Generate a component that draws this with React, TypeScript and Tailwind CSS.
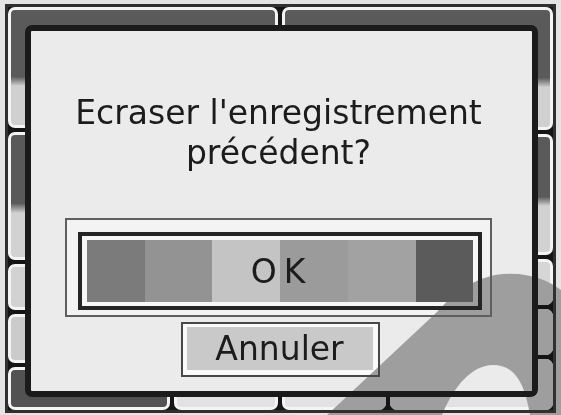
import React from 'react';

const Tile: React.FC<{ className: string }> = ({ className }) => (
  <div className={`rounded-[7px] border-[3px] border-[#f4f4f4] ${className}`} />
);

const blocks = [
  'w-[58px] bg-[#7b7b7b]',
  'w-[67px] bg-[#939393]',
  'w-[68px] bg-[#c4c4c4]',
  'w-[68px] bg-[#9b9b9b]',
  'w-[68px] bg-[#a2a2a2]',
  'w-[57px] bg-[#5b5b5b]',
];

const App: React.FC = () => {
  return (
    <div className="relative w-[561px] h-[415px] overflow-hidden bg-[#e4e4e4] pt-[4px] pl-[5px] pr-[5px] pb-[2px] font-['DejaVu_Sans',sans-serif]">
      {/* background tabs */}
      <div className="h-full flex gap-[4px] border-[3px] border-[#303030] bg-[#151515]">
        <div className="w-[270px] flex flex-col gap-[4px]">
          <Tile className="h-[121px] bg-[linear-gradient(#5a5a5a_58%,#d0d0d0_66%)]" />
          <Tile className="h-[128px] bg-[linear-gradient(#5a5a5a_56%,#d2d2d2_64%)]" />
          <Tile className="h-[46px] bg-[#d2d2d2]" />
          <Tile className="h-[49px] bg-[#cbcbcb]" />
          <div className="flex-1 flex gap-[4px]">
            <Tile className="w-[162px] bg-[#525252]" />
            <Tile className="flex-1 bg-[#e2e2e2]" />
          </div>
        </div>
        <div className="flex-1 flex flex-col gap-[4px]">
          <Tile className="h-[123px] bg-[linear-gradient(#5a5a5a_58%,#d0d0d0_66%)]" />
          <Tile className="h-[121px] bg-[linear-gradient(#5a5a5a_52%,#d2d2d2_60%)]" />
          <Tile className="h-[46px] bg-[#d6d6d6]" />
          <Tile className="h-[46px] bg-[#d0d0d0]" />
          <div className="flex-1 flex gap-[4px]">
            <Tile className="w-[104px] bg-[#e2e2e2]" />
            <Tile className="flex-1 bg-[#e2e2e2]" />
          </div>
        </div>
      </div>

      {/* dialog */}
      <div className="absolute left-[25px] top-[25px] w-[513px] h-[372px] rounded-[7px] border-[6px] border-[#1b1b1b] bg-[#ebebeb] flex flex-col items-center pt-[62px] pr-[6px] text-[#1c1c1c]">
        <p className="text-[33px] leading-[40px] text-center">
          Ecraser l'enregistrement
          <br />
          précédent?
        </p>

        <div className="mt-[45px] w-[427px] border-2 border-[#5f5f5f] bg-[#f3f3f3] pt-[12px] pb-[5px] pl-[11px] pr-[8px]">
          <div className="border-[4px] border-[#252525] bg-[#f7f7f7] px-[5px] py-[4px]">
            <div className="relative flex h-[62px]">
              {blocks.map((b, i) => (
                <div key={i} className={`h-full ${b}`} />
              ))}
              <div className="absolute inset-0 flex items-center justify-center text-[33px] leading-none tracking-[7px] pl-[3px]">
                OK
              </div>
            </div>
          </div>
        </div>

        <div className="mt-[5px] ml-[3px] border-2 border-[#484848] bg-[#fafafa] pt-[3px] pb-[5px] pl-[4px] pr-[5px]">
          <div className="w-[186px] h-[43px] bg-[#c9c9c9] flex items-center justify-center text-[33px] leading-none">
            Annuler
          </div>
        </div>
      </div>

      {/* grey swoosh over the corner */}
      <svg className="absolute inset-0 pointer-events-none mix-blend-darken" width="561" height="415" viewBox="0 0 561 415">
        <path
          fillRule="evenodd"
          fill="#9e9e9e"
          d="M327 415 L437 312 C450 298 465 282 495 275 C525 270 548 280 561 290 L561 415 Z M442 415 C454 386 472 365 493 365 C512 365 524 378 530 415 Z"
        />
      </svg>
    </div>
  );
};

export default App;
